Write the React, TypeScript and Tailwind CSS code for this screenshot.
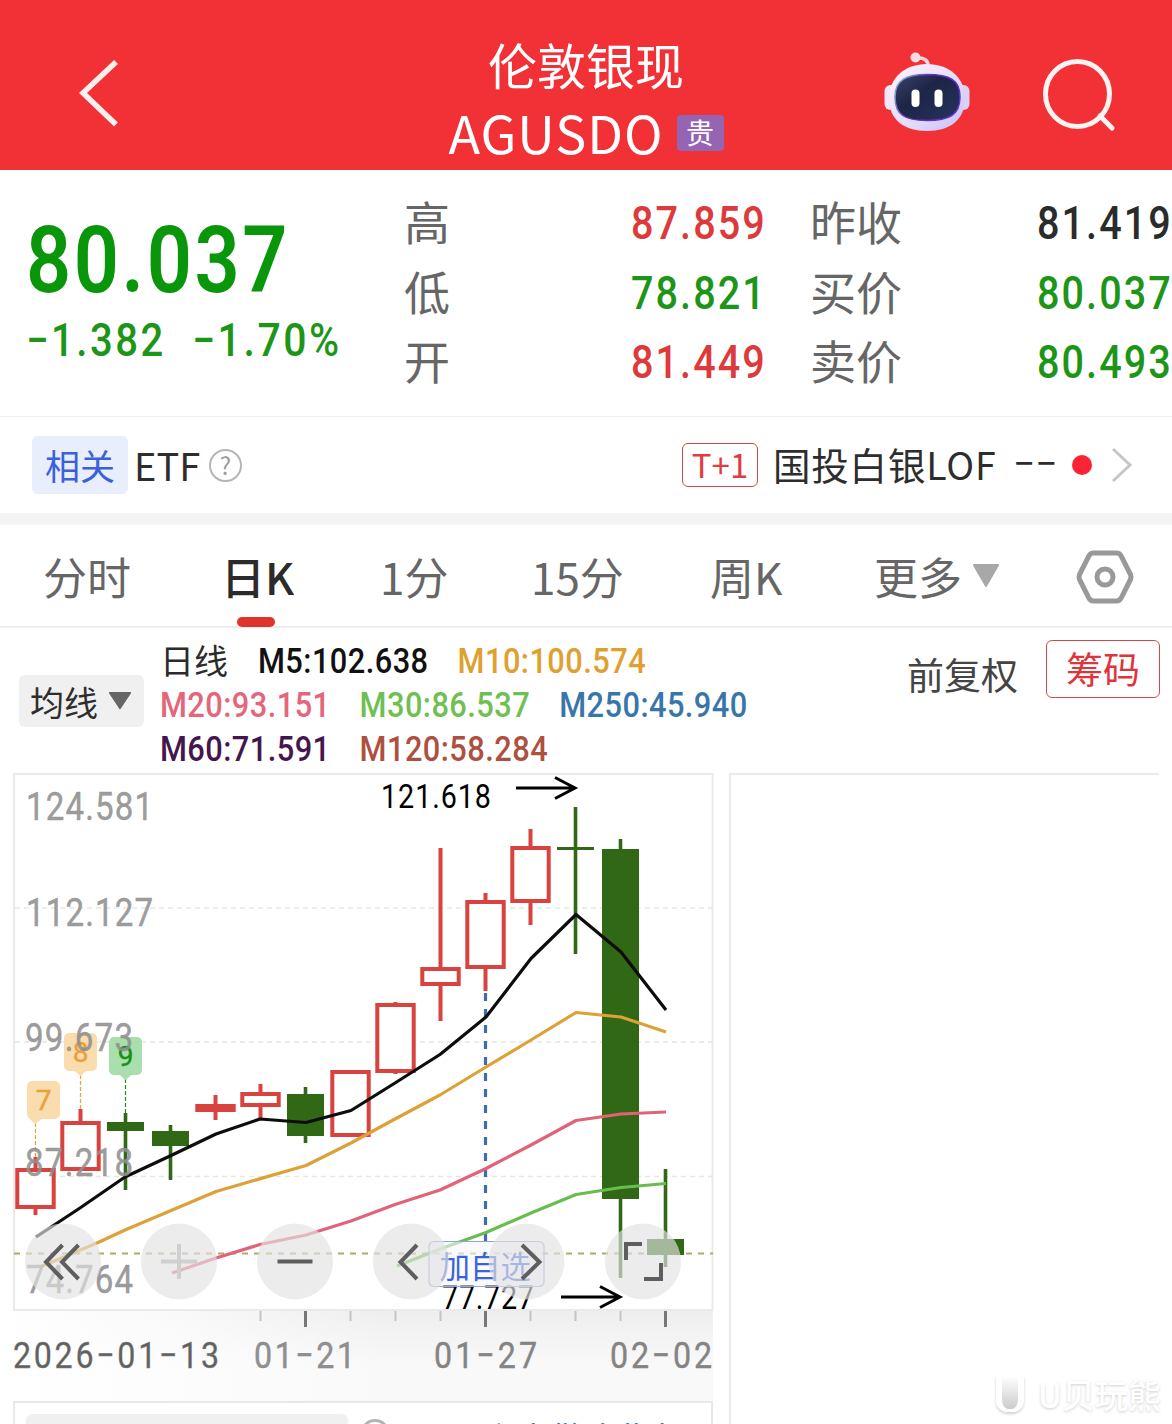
import type { ReactNode } from "react";

const CJK = "font-['Noto_Sans_CJK_SC',sans-serif]";
const NUM = "font-[Roboto,'Noto_Sans_CJK_SC',sans-serif]";

// ── Data ──────────────────────────────────────────────────────────────────────

const quotes = [
  { label: "高", value: "87.859", color: "text-[#dc3a3c]", label2: "昨收", value2: "81.419", color2: "text-[#2b2b2b]" },
  { label: "低", value: "78.821", color: "text-[#1d9518]", label2: "买价", value2: "80.037", color2: "text-[#1d9518]" },
  { label: "开", value: "81.449", color: "text-[#dc3a3c]", label2: "卖价", value2: "80.493", color2: "text-[#1d9518]" },
];

const averages = [
  [
    { text: "M5:102.638", color: "text-[#111111]" },
    { text: "M10:100.574", color: "text-[#dfa032]" },
  ],
  [
    { text: "M20:93.151", color: "text-[#e3667a]" },
    { text: "M30:86.537", color: "text-[#6fbf52]" },
    { text: "M250:45.940", color: "text-[#3876aa]" },
  ],
  [
    { text: "M60:71.591", color: "text-[#44164f]" },
    { text: "M120:58.284", color: "text-[#ae5040]" },
  ],
];

interface Candle {
  kind: "up" | "down";
  high: number;
  top: number;
  bottom: number;
  low: number;
}

const candles: Candle[] = [
  { kind: "up", high: 1157, top: 1168, bottom: 1209, low: 1215 },
  { kind: "up", high: 1109, top: 1121, bottom: 1171, low: 1171 },
  { kind: "down", high: 1113, top: 1122, bottom: 1131, low: 1190 },
  { kind: "down", high: 1125, top: 1131, bottom: 1146, low: 1180 },
  { kind: "up", high: 1095, top: 1104, bottom: 1112, low: 1120 },
  { kind: "up", high: 1084, top: 1092, bottom: 1107, low: 1119 },
  { kind: "down", high: 1087, top: 1094, bottom: 1136, low: 1143 },
  { kind: "up", high: 1070, top: 1070, bottom: 1137, low: 1137 },
  { kind: "up", high: 1002, top: 1003, bottom: 1073, low: 1074 },
  { kind: "up", high: 848, top: 967, bottom: 986, low: 1021 },
  { kind: "up", high: 893, top: 900, bottom: 969, low: 991 },
  { kind: "up", high: 829, top: 846, bottom: 903, low: 925 },
  { kind: "down", high: 807, top: 847, bottom: 850, low: 954 },
  { kind: "down", high: 839, top: 849, bottom: 1199, low: 1278 },
  { kind: "down", high: 1169, top: 1239, bottom: 1255, low: 1267 },
];

const lines = [
  { color: "#0d0d0d", points: "36,1237 80,1208 125,1177 170,1156 216,1134 260,1119 306,1122.5 351,1110.5 395,1083 440,1054.5 486,1017 531,958.5 576,914.5 621,952 666,1010" },
  { color: "#dda137", points: "40,1267 97,1243 125,1230 216,1191.5 306,1165.5 351,1143 395,1119 440,1095 486,1067 531,1040 576,1012.5 621,1017 666,1032" },
  { color: "#e0637a", points: "172,1273 216,1258 260,1244.5 306,1235 351,1221 395,1204.5 440,1190 486,1168.5 531,1145 576,1120.5 621,1114 666,1112" },
  { color: "#69bd50", points: "397,1266 440,1249 486,1232.5 531,1213 576,1194.5 621,1187.5 666,1183.5" },
];

const priceLabels = [
  { text: "124.581", x: 26, y: 820, w: 127 },
  { text: "112.127", x: 26, y: 926, w: 127 },
  { text: "99.673", x: 25, y: 1051, w: 108 },
  { text: "87.218", x: 25, y: 1176, w: 108 },
  { text: "74.764", x: 26, y: 1293, w: 107 },
];

const tags = [
  { text: "7", x: 43.5, y: 1081, line: 35.5, to: 1157, fill: "#fbdcae", color: "#e9a13b" },
  { text: "8", x: 80.5, y: 1033, line: 80.5, to: 1109, fill: "#fbdcae", color: "#e9a13b" },
  { text: "9", x: 125.5, y: 1037, line: 125.5, to: 1113, fill: "#a9dfac", color: "#179017" },
];

const minorTicks = [260.5, 350.5, 395.5, 440.5, 530.5, 575.5, 620.5];
const majorTicks = [305.5, 485.5, 665.5];

// ── Icons ─────────────────────────────────────────────────────────────────────

function RobotIcon() {
  return (
    <svg width="88" height="82" viewBox="883 51 88 82">
      <defs>
        <linearGradient id="shell" x1="0" y1="0" x2="1" y2="1">
          <stop offset="0" stopColor="#fff4fa" />
          <stop offset="0.6" stopColor="#e3dafa" />
          <stop offset="1" stopColor="#c5bdf5" />
        </linearGradient>
        <linearGradient id="rim" x1="0" y1="0" x2="1" y2="0.4">
          <stop offset="0" stopColor="#7fc4d6" />
          <stop offset="0.5" stopColor="#6a2bb8" />
          <stop offset="1" stopColor="#5a33c8" />
        </linearGradient>
        <linearGradient id="visor" x1="0" y1="0" x2="1" y2="1">
          <stop offset="0" stopColor="#3a4468" />
          <stop offset="0.4" stopColor="#1d2547" />
          <stop offset="1" stopColor="#26335e" />
        </linearGradient>
      </defs>
      <path d="M917 58 Q928 57 928.500 67" fill="none" stroke="#fbd3da" strokeWidth="3.500" />
      <circle cx="915.500" cy="57.500" r="5" fill="#fcdce3" />
      <rect x="884.500" y="85" width="14" height="25" rx="6" fill="#f4e4f5" />
      <rect x="955.500" y="85" width="14" height="25" rx="6" fill="#dcd0f5" />
      <path d="M927 64 C949 64 965 78 965 98 C965 120 950 131 927 131 C904 131 889 120 889 98 C889 78 905 64 927 64Z" fill="url(#shell)" />
      <path d="M927 74.500 C950 74.500 960 80 960 97 C960 115 949 120.500 927 120.500 C905 120.500 895 115 895 97 C895 80 906 74.500 927 74.500Z" fill="url(#visor)" stroke="url(#rim)" strokeWidth="1.500" />
      <rect x="911.500" y="89.500" width="8" height="17.500" rx="4" fill="#fff" />
      <rect x="934.500" y="89.500" width="8" height="17.500" rx="4" fill="#fff" />
    </svg>
  );
}

function Triangle({ className }: { className: string }) {
  return (
    <svg className={className} viewBox="0 0 28 22" preserveAspectRatio="none">
      <path d="M2 1 H26 L14 20Z" fill="currentColor" stroke="currentColor" strokeWidth="2" strokeLinejoin="round" />
    </svg>
  );
}

// ── Header ────────────────────────────────────────────────────────────────────

function Header() {
  return (
    <header className="flex h-[170px] items-start bg-[#f13136] text-white">
      <svg className="mt-[58px] ml-[78px]" width="42" height="70" viewBox="78 58 42 70">
        <path d="M116 62 L83 93 L116 124.500" fill="none" stroke="#fff0ee" strokeWidth="5.500" />
      </svg>
      <div className="ml-[279px] flex w-[374px] flex-col items-center pt-[31px]">
        <div className="text-[49px] leading-[66px]">伦敦银现</div>
        <div className="flex items-center gap-[13px] leading-[70px]">
          <span className="text-[52px] tracking-[1px]">AGUSDO</span>
          <span className="mt-px flex h-[36px] w-[47px] items-center justify-center rounded-[4px] bg-[#9564b3] pb-px text-[28px]">贵</span>
        </div>
      </div>
      <div className="mt-[51px] ml-[110px]">
        <RobotIcon />
      </div>
      <svg className="mt-[57px] ml-[69px]" width="76" height="76" viewBox="1040 57 76 76" fill="none" stroke="#fff3f2" strokeWidth="5">
        <ellipse cx="1077.500" cy="94" rx="32" ry="32.500" />
        <path d="M1100 116 L1112 128" strokeLinecap="round" />
      </svg>
    </header>
  );
}

// ── Quote ─────────────────────────────────────────────────────────────────────

function Quote() {
  return (
    <section className="flex h-[247px] border-b border-[#efefef]">
      <div className={`w-[404px] pl-[26px] text-[#0a960a] ${NUM}`}>
        <div className="mt-[45px] origin-left scale-x-[0.86] text-[92px] leading-[92px] font-semibold tracking-[3px]">80.037</div>
        <div className="mt-[6px] flex text-[46px] leading-[54px] font-medium tracking-[2.900px] whitespace-nowrap text-[#1d9518]">
          <span className="w-[166px] origin-left scale-x-[0.87]">−1.382</span>
          <span className="w-[166px] origin-left scale-x-[0.89]">−1.70%</span>
        </div>
      </div>
      <div className="flex flex-1 flex-col pt-[18px]">
        {quotes.map((q) => (
          <div key={q.label} className="flex h-[69.500px] items-center text-[46px] text-[#666666]">
            <span className="mt-[-4px] w-[227px]">{q.label}</span>
            <span className={`mt-[2px] w-[179px] origin-left scale-x-[0.86] font-medium tracking-[2.400px] ${NUM} ${q.color}`}>{q.value}</span>
            <span className="mt-[-4px] w-[227px]">{q.label2}</span>
            <span className={`mt-[2px] w-[135px] origin-left scale-x-[0.86] font-medium tracking-[2.400px] ${NUM} ${q.color2}`}>{q.value2}</span>
          </div>
        ))}
      </div>
    </section>
  );
}

function Related() {
  return (
    <section className="flex h-[108px] items-center border-b-[12px] border-[#f4f4f4] pl-8 whitespace-nowrap text-[#2d2d2d]">
      <span className="flex h-[58px] w-24 items-center justify-center rounded-md bg-[#e9eefd] text-[35px] text-[#3a60dc]">相关</span>
      <span className="mt-[-2px] ml-[6px] w-[72px] text-[38px]">ETF</span>
      <span className="ml-[3px] flex size-[33px] items-center justify-center rounded-full border-2 border-[#b5b5b5] text-[24px] text-[#999999]">?</span>
      <span className="ml-[440px] flex h-[44px] w-[76px] items-center justify-center rounded-md border border-[#d3474c] text-[33px] text-[#e03c42]">T+1</span>
      <span className="mt-[-1px] ml-[15px] w-[240px] text-[37.500px] tracking-[0.800px]">国投白银LOF</span>
      <span className={`mt-[-2px] w-[44px] text-[39px] ${NUM}`}>−−</span>
      <span className="ml-[15px] size-5 rounded-full bg-[#fd2334]" />
      <svg className="ml-[18px]" width="24" height="36" viewBox="0 0 24 36">
        <path d="M3 2 L20 18 L3 34" fill="none" stroke="#c6c6c6" strokeWidth="3" />
      </svg>
    </section>
  );
}

// ── Period tabs ───────────────────────────────────────────────────────────────

function Tabs() {
  return (
    <nav className="flex h-[103px] items-center border-b-2 border-[#efefef] pl-[43px] text-[44px] leading-[66px] whitespace-nowrap text-[#666666]">
      <span className="w-[178px]">分时</span>
      <span className="relative w-[159px] font-medium text-[#2b2b2b]">
        日K
        <span className="absolute bottom-[-18px] left-[16px] h-[10px] w-[38px] rounded-full bg-[#e03330]" />
      </span>
      <span className="w-[151px]">1分</span>
      <span className="w-[179px]">15分</span>
      <span className="w-[164px]">周K</span>
      <span>更多</span>
      <Triangle className="ml-[10px] h-[24px] w-[28px] text-[#a8a8a8]" />
      <svg className="mt-[2px] ml-[75px]" width="60" height="58" viewBox="0 0 60 58" fill="none" stroke="#999999" strokeWidth="5">
        <path d="M18.500 5 H41.500 Q44.500 5 46 7.700 L55.500 26.500 Q56.500 29 55.500 31.500 L46 50.300 Q44.500 53 41.500 53 H18.500 Q15.500 53 14 50.300 L4.500 31.500 Q3.500 29 4.500 26.500 L14 7.700 Q15.500 5 18.500 5Z" />
        <circle cx="30" cy="29" r="8" />
      </svg>
    </nav>
  );
}

function Legend() {
  return (
    <section className="flex h-[145px] pl-[19px]">
      <div className="mt-[47px] flex h-[52px] w-[125px] items-center rounded-md bg-[#f0f0f0] pl-[11px] text-[34px] text-[#2e2e2e]">
        均线
        <Triangle className="ml-[10px] h-[18px] w-[24px] text-[#666666]" />
      </div>
      <div className={`ml-[16px] w-[747px] pt-[12px] text-[35px] leading-[44px] font-medium ${NUM}`}>
        {averages.map((row, i) => (
          <div key={i} className="flex h-[44px] whitespace-nowrap">
            {i === 0 && <span className={`mt-[-2px] w-[98px] text-[34px] font-normal text-[#2b2b2b] ${CJK}`}>日线</span>}
            <div className="flex origin-left scale-x-[0.88] gap-[33px] tracking-[0.500px]">
              {row.map((m) => (
                <span key={m.text} className={m.color}>{m.text}</span>
              ))}
            </div>
          </div>
        ))}
      </div>
      <span className="mt-[18px] w-[139px] text-[37px] leading-[56px] text-[#444444]">前复权</span>
      <span className="mt-[12px] flex h-[58px] w-[114px] items-center justify-center rounded-md border border-[#d3474c] text-[37px] text-[#e0343c]">筹码</span>
    </section>
  );
}

// ── K-line chart ──────────────────────────────────────────────────────────────

// narrow digits, stretched out to a fixed width by their spacing
function NumText({ x, y, w, fill, children }: { x: number; y: number; w: number; fill?: string; children: string }) {
  return (
    <text transform={`translate(${x} ${y}) scale(0.87 1)`} textLength={w / 0.87} fill={fill}>
      {children}
    </text>
  );
}

function CandleShape({ candle, x }: { candle: Candle; x: number }) {
  const { kind, high, top, bottom, low } = candle;
  if (kind === "down") {
    return (
      <g fill="#306815">
        <rect x={x - 1.8} y={high} width="3.600" height={low - high} />
        <rect x={x - 18.5} y={top} width="37" height={bottom - top} />
      </g>
    );
  }
  return (
    <g fill="none" stroke="#d8423f" strokeWidth="4">
      <path d={`M${x} ${high}V${top + 2}M${x} ${bottom - 2}V${low}`} />
      <rect x={x - 18.2} y={top + 2} width="36.400" height={bottom - top - 4} fill={bottom - top < 10 ? "#e0393a" : "#fff"} />
    </g>
  );
}

function RoundButton({ cx, children }: { cx: number; children: ReactNode }) {
  return (
    <g>
      <circle cx={cx} cy="1261.500" r="38" fill="#e2e2e2" fillOpacity="0.660" />
      <g fill="none" stroke="#5e5e5e" strokeWidth="4">{children}</g>
    </g>
  );
}

function Chart() {
  return (
    <svg className="block overflow-visible" width="720" height="538" viewBox="0 773 720 538">
      <rect x="14" y="774" width="698.500" height="536" fill="#fff" stroke="#eaeaea" strokeWidth="2" />
      {[908, 1042, 1176.5].map((y) => (
        <path key={y} d={`M15 ${y}H712`} stroke="#e6e6e6" strokeWidth="1.500" strokeDasharray="5 4" />
      ))}
      <path d="M14 1253.500H713" stroke="#b3a86c" strokeWidth="1.800" strokeDasharray="6 6" />

      {candles.map((c, i) => (
        <CandleShape key={i} candle={c} x={35.5 + i * 45} />
      ))}
      <path d="M485.500 993V1241" stroke="#4369b3" strokeWidth="3.200" strokeDasharray="8 8" />
      {lines.map((l) => (
        <polyline key={l.color} points={l.points} fill="none" stroke={l.color} strokeWidth="3.200" strokeLinejoin="round" />
      ))}

      {tags.map((t) => (
        <g key={t.text}>
          <path d={`M${t.line} ${t.y + 42}V${t.to}`} stroke={t.color} strokeWidth="1.200" strokeDasharray="4 2" />
          <rect x={t.x - 16.5} y={t.y} width="33" height="38" rx="5" fill={t.fill} />
          <path d={`M${t.line - 7} ${t.y + 37}h14l-7 6z`} fill={t.fill} />
          <text x={t.x} y={t.y + 29} textAnchor="middle" className={`text-[28px] ${NUM}`} fill={t.color} stroke={t.color} strokeWidth="0.400">{t.text}</text>
        </g>
      ))}
      <g className={`text-[38px] ${NUM}`} fill="#8f8f8f" fillOpacity="0.880" stroke="#8f8f8f" strokeWidth="0.500" strokeOpacity="0.880">
        {priceLabels.map((p) => (
          <NumText key={p.text} x={p.x} y={p.y} w={p.w}>{p.text}</NumText>
        ))}
      </g>

      <g className={`text-[33px] ${NUM}`} fill="#000">
        <NumText x={381} y={808} w={110}>121.618</NumText>
        <NumText x={442} y={1308.5} w={92}>77.727</NumText>
      </g>
      <g fill="none" stroke="#000" strokeWidth="3">
        <path d="M516 788H575M555 777.500L575 788L555 798.500" />
        <path d="M561 1297H620M600 1286.500L620 1297L600 1307.500" />
      </g>

      <rect x="429" y="1241.500" width="115" height="45" rx="5" fill="#f3f6ff" fillOpacity="0.600" stroke="#8fa6dc" strokeWidth="1.200" />
      <text x="439.500" y="1277.500" className={`text-[30.500px] ${CJK}`} fill="#3a63d8">加自选</text>

      <RoundButton cx={63}><path d="M62.500 1245L46 1262L62.500 1279M78.500 1245L62 1262L78.500 1279" /></RoundButton>
      <RoundButton cx={179}><path d="M161 1261.500H197M179 1244V1279" stroke="#cfcfcf" /></RoundButton>
      <RoundButton cx={295}><path d="M277.500 1261.500H312.500" /></RoundButton>
      <RoundButton cx={411}><path d="M417 1245L400.500 1262L417 1279" /></RoundButton>
      <RoundButton cx={526.5}><path d="M522 1245L539.500 1262L522 1279" /></RoundButton>
      <RoundButton cx={643}><path d="M626 1260V1244H642M661 1263V1279H644" /></RoundButton>
    </svg>
  );
}

function DateAxis() {
  return (
    <svg
      className="block bg-[linear-gradient(to_right,#fff,#ffffffa0_25%,#ffffff00_55%),linear-gradient(to_bottom,#eeeeee,#f9f9f9_60%)]"
      width="713"
      height="90"
      viewBox="0 1311 713 90"
    >
      {minorTicks.map((x) => (
        <path key={x} d={`M${x} 1311V1321`} stroke="#c4c4c4" strokeWidth="2" />
      ))}
      {majorTicks.map((x) => (
        <path key={x} d={`M${x} 1311V1327`} stroke="#777" strokeWidth="3" />
      ))}
      <g className={`text-[37px] ${NUM}`} fill="#848484" stroke="#848484" strokeWidth="0.400">
        <NumText x={13} y={1367.5} w={206} fill="#606060">2026−01−13</NumText>
        <NumText x={254} y={1367.5} w={101} fill="#909090">01−21</NumText>
        <NumText x={434} y={1367.5} w={103}>01−27</NumText>
        <NumText x={610} y={1367.5} w={102}>02−02</NumText>
      </g>
    </svg>
  );
}

// ── Page ──────────────────────────────────────────────────────────────────────

export default function App() {
  return (
    <div className={`h-[1424px] w-[1172px] overflow-hidden bg-white ${CJK}`}>
      <Header />
      <Quote />
      <Related />
      <Tabs />
      <Legend />
      <main className="flex h-[651px]">
        <div className="w-[729px]">
          <Chart />
          <DateAxis />
          <div className="ml-[13px] flex h-[23px] w-[700px] items-start overflow-hidden border-2 border-b-0 border-[#e8e8e8] pt-[11px] pl-[11px]">
            <span className="h-10 w-[322px] shrink-0 rounded-md bg-[#f0f0f0]" />
            <span className="mt-[5px] ml-[12px] size-[30px] shrink-0 rounded-full border-3 border-[#b4b4b4]" />
            <span className="mt-[7px] ml-[94px] shrink-0 text-[34px] leading-[34px] text-[#3876aa]">主力散户指标</span>
          </div>
        </div>
        <div className="relative w-[430px] border-t-2 border-l-2 border-[#ebebeb]">
          <div className="absolute right-[-2px] bottom-[12px] flex items-center gap-[14px] text-[33px] leading-[36px] font-medium whitespace-nowrap text-white [text-shadow:0_1px_3px_#cfcfcf]">
            <span className="h-[36px] w-[28px] rounded-b-xl border-x-[6px] border-b-[3px] border-white bg-linear-to-b from-white to-[#cccccc] shadow-[0_2px_3px_#d0d0d0]" />
            <span>U贝玩熊</span>
          </div>
        </div>
      </main>
    </div>
  );
}
